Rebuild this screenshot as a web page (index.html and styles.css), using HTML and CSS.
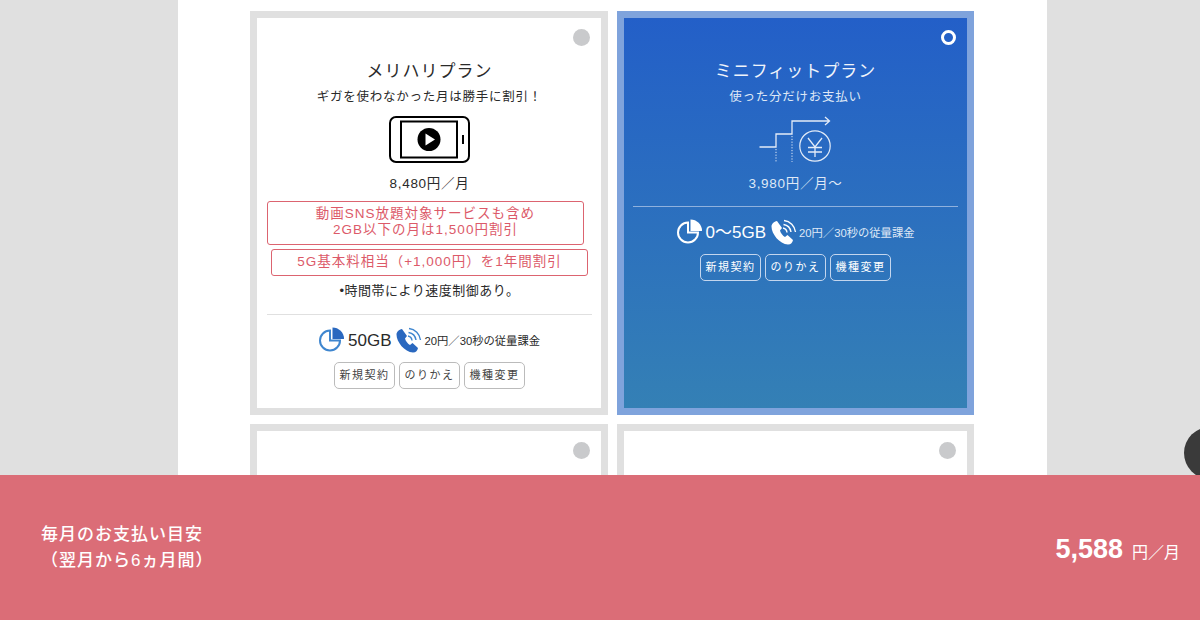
FILE: index.html
```html
<!DOCTYPE html>
<html lang="ja">
<head>
  <meta charset="UTF-8">
  <meta name="viewport" content="width=device-width, initial-scale=1.0">
  <title>料金プラン</title>
  <link rel="stylesheet" href="styles.css">
</head>
<body>
  <main class="main-content">
    <div class="plan-grid">

      <!-- メリハリプラン -->
      <section class="plan-card">
        <span class="radio"></span>
        <h2 class="plan-name">メリハリプラン</h2>
        <p class="plan-lead">ギガを使わなかった月は勝手に割引！</p>
        <svg class="plan-icon" width="81" height="47" viewBox="0 0 81 47" fill="none" stroke="#000">
          <rect x="1" y="1" width="79" height="45" rx="6" stroke-width="2"/>
          <rect x="12" y="5.5" width="56" height="36" stroke-width="2"/>
          <line x1="74" y1="19" x2="74" y2="28" stroke-width="2"/>
          <circle cx="40" cy="23.5" r="11.5" fill="#000" stroke="none"/>
          <path d="M36.5 17.5 L46 23.5 L36.5 29.5 Z" fill="#fff" stroke="none"/>
        </svg>
        <p class="plan-price">8,480円／月</p>
        <p class="notice notice-first">動画SNS放題対象サービスも含め<br>2GB以下の月は1,500円割引</p>
        <p class="notice notice-second">5G基本料相当（+1,000円）を1年間割引</p>
        <p class="plan-note">•時間帯により速度制御あり。</p>
        <hr class="divider">
        <div class="spec-row">
          <svg class="spec-pie" width="26" height="26" viewBox="0 0 26 26">
            <path d="M11 3.5 A10 10 0 1 0 21 13.5 H11 Z" fill="none" stroke="#3f86cf" stroke-width="2"/>
            <path d="M13.5 0.5 A11.5 11.5 0 0 1 25 12 H13.5 Z" fill="#2a68bf"/>
          </svg>
          <span class="spec-data">50GB</span>
          <svg class="spec-phone" width="26" height="26" viewBox="0 0 26 26" fill="none" stroke="#3f86cf" stroke-width="1.4">
            <path d="M0.5 7.5 C0.5 15 8.5 25 17 25.5 C20 25.5 21.5 23.5 22 21 L16.5 16 L14 18 C12 17 9.5 14 9 11.5 L11 9 L6 2 C3 2.5 0.5 5 0.5 7.5 Z" fill="#2a68bf" stroke="none"/>
            <path d="M12 9 A5 5 0 0 1 16 13.5"/>
            <path d="M12.5 5.5 A9 9 0 0 1 20 13"/>
            <path d="M13 1.5 A13 13 0 0 1 24.5 13"/>
          </svg>
          <span class="spec-call">20円／30秒の従量課金</span>
        </div>
        <div class="tag-row">
          <span class="tag">新規契約</span>
          <span class="tag">のりかえ</span>
          <span class="tag">機種変更</span>
        </div>
      </section>

      <!-- ミニフィットプラン (selected) -->
      <section class="plan-card selected">
        <span class="radio"></span>
        <h2 class="plan-name">ミニフィットプラン</h2>
        <p class="plan-lead">使った分だけお支払い</p>
        <svg class="plan-icon" width="72" height="47" viewBox="0 0 72 47" fill="none" stroke="#e4ecf8">
          <path d="M0.5 31 H17 V18 H33 V5 H70 M66 1 L70.5 5 L66 9" stroke-width="1.3"/>
          <path d="M17 33 V46 M33 20 V46" stroke-width="1" stroke-dasharray="1.2 1.6"/>
          <circle cx="56" cy="30" r="15.2" stroke-width="1.2"/>
          <path d="M49 22 L56 31 L63 22 M56 31 V41 M49 31.5 H63 M49 36 H63" stroke-width="1.3"/>
        </svg>
        <p class="plan-price">3,980円／月～</p>
        <hr class="divider">
        <div class="spec-row">
          <svg class="spec-pie" width="26" height="26" viewBox="0 0 26 26">
            <path d="M11 3.5 A10 10 0 1 0 21 13.5 H11 Z" fill="none" stroke="#fff" stroke-width="2"/>
            <path d="M13.5 0.5 A11.5 11.5 0 0 1 25 12 H13.5 Z" fill="#fff"/>
          </svg>
          <span class="spec-data">0～5GB</span>
          <svg class="spec-phone" width="26" height="26" viewBox="0 0 26 26" fill="none" stroke="#fff" stroke-width="1.4">
            <path d="M0.5 7.5 C0.5 15 8.5 25 17 25.5 C20 25.5 21.5 23.5 22 21 L16.5 16 L14 18 C12 17 9.5 14 9 11.5 L11 9 L6 2 C3 2.5 0.5 5 0.5 7.5 Z" fill="#fff" stroke="none"/>
            <path d="M12 9 A5 5 0 0 1 16 13.5"/>
            <path d="M12.5 5.5 A9 9 0 0 1 20 13"/>
            <path d="M13 1.5 A13 13 0 0 1 24.5 13"/>
          </svg>
          <span class="spec-call">20円／30秒の従量課金</span>
        </div>
        <div class="tag-row">
          <span class="tag">新規契約</span>
          <span class="tag">のりかえ</span>
          <span class="tag">機種変更</span>
        </div>
      </section>

      <section class="plan-card"><span class="radio"></span></section>
      <section class="plan-card"><span class="radio"></span></section>

    </div>
  </main>

  <div class="round-button"></div>

  <footer class="estimate-bar">
    <p class="estimate-label">毎月のお支払い目安<br>（翌月から6ヵ月間）</p>
    <p class="estimate-price"><strong>5,588</strong><span>円／月</span></p>
  </footer>
</body>
</html>
```

FILE: styles.css
```css
html, body {
  height: 100%;
  overflow: hidden;
}
body {
  font-family: "Liberation Sans", "Noto Sans CJK JP", sans-serif;
  margin: 0;
  padding: 0;
  background-color: #e0e0e0;
  color: #2a2a2a;
}
h2, p {
  margin: 0;
  font-weight: 400;
}
.main-content {
  width: 869px;
  height: 100vh;
  margin-left: 178px;
  overflow: hidden;
  background-color: #fff;
}
.plan-grid {
  display: grid;
  grid-template-columns: 358px 357px;
  grid-auto-rows: 404px;
  gap: 9px;
  padding: 11px 0 0 72px;
}
.plan-card {
  position: relative;
  box-sizing: border-box;
  display: flex;
  flex-direction: column;
  align-items: center;
  padding: 42px 9px 0 10px;
  border: 7px solid #e0e0e0;
  background-color: #fff;
  text-align: center;
}
.plan-card.selected {
  padding: 42px 9px 0;
  border-color: #7fa3dc;
  background: linear-gradient(180deg, #235fc8 0%, #3480b5 100%);
  color: #dfe8f6;
}
.radio {
  position: absolute;
  top: 11px;
  right: 11px;
  box-sizing: border-box;
  width: 17px;
  height: 17px;
  border-radius: 50%;
  background-color: #c9cacc;
}
.selected .radio {
  top: 12px;
  right: 11px;
  width: 15px;
  height: 15px;
  border: 3px solid #fff;
  background-color: transparent;
}
.plan-name {
  font-size: 17px;
  line-height: 24px;
  letter-spacing: 1px;
}
.selected .plan-name {
  color: #f0f4fb;
}
.plan-lead {
  margin-top: 3px;
  font-size: 12.5px;
  line-height: 20px;
  letter-spacing: 0.75px;
}
.plan-icon {
  display: block;
  margin-top: 9px;
}
.selected .plan-icon {
  margin-right: 2px;
}
.plan-price {
  margin-top: 11px;
  font-size: 13.5px;
  line-height: 20px;
  letter-spacing: 0.7px;
}
.notice {
  box-sizing: border-box;
  width: 317px;
  border: 1px solid #dc6470;
  border-radius: 3px;
  color: #dc5a69;
  font-size: 13.5px;
  line-height: 16px;
  letter-spacing: 1px;
  white-space: nowrap;
}
.notice-first {
  align-self: flex-start;
  height: 44px;
  margin-top: 7px;
  padding-top: 4px;
}
.notice-second {
  align-self: flex-start;
  height: 27px;
  margin: 4px 0 0 4px;
  padding-top: 4px;
}
.plan-note {
  margin-top: 5px;
  font-size: 13px;
  line-height: 20px;
  letter-spacing: 0.5px;
}
.divider {
  align-self: stretch;
  height: 1px;
  margin: 13px 0 0;
  border: 0;
  background-color: #e0e0e0;
}
.selected .divider {
  margin-top: 12px;
  background-color: #8fb1de;
}
.spec-row {
  display: flex;
  align-items: center;
  height: 26px;
  margin-top: 12px;
}
.spec-data {
  margin: 0 5px 0 3px;
  padding-top: 2px;
  font-size: 17px;
  line-height: 24px;
}
.selected .spec-data {
  color: #fff;
}
.spec-call {
  margin-left: 2px;
  padding-top: 2px;
  font-size: 11.3px;
  line-height: 24px;
}
.tag-row {
  display: flex;
  gap: 4px;
  margin-top: 9px;
}
.tag {
  box-sizing: border-box;
  width: 61px;
  height: 27px;
  border: 1px solid #bbb;
  border-radius: 5px;
  color: #444;
  font-size: 11px;
  line-height: 25px;
  letter-spacing: 1.5px;
}
.selected .tag {
  border-color: #c4d6ee;
  color: #fff;
}
.round-button {
  position: fixed;
  top: 427px;
  left: 1184px;
  width: 52px;
  height: 52px;
  border-radius: 50%;
  background-color: #3a3a3a;
}
.estimate-bar {
  position: fixed;
  left: 0;
  right: 0;
  bottom: 0;
  height: 145px;
  box-sizing: border-box;
  display: flex;
  align-items: center;
  justify-content: space-between;
  padding: 0 20px 0 41px;
  background-color: #db6d77;
  color: #fff;
}
.estimate-label {
  font-size: 17px;
  font-weight: 500;
  line-height: 26px;
  letter-spacing: 1px;
}
.estimate-price {
  display: flex;
  align-items: baseline;
  gap: 9px;
  margin-top: 4px;
}
.estimate-price strong {
  font-size: 27px;
  font-weight: 700;
}
.estimate-price span {
  font-size: 16px;
}
```
